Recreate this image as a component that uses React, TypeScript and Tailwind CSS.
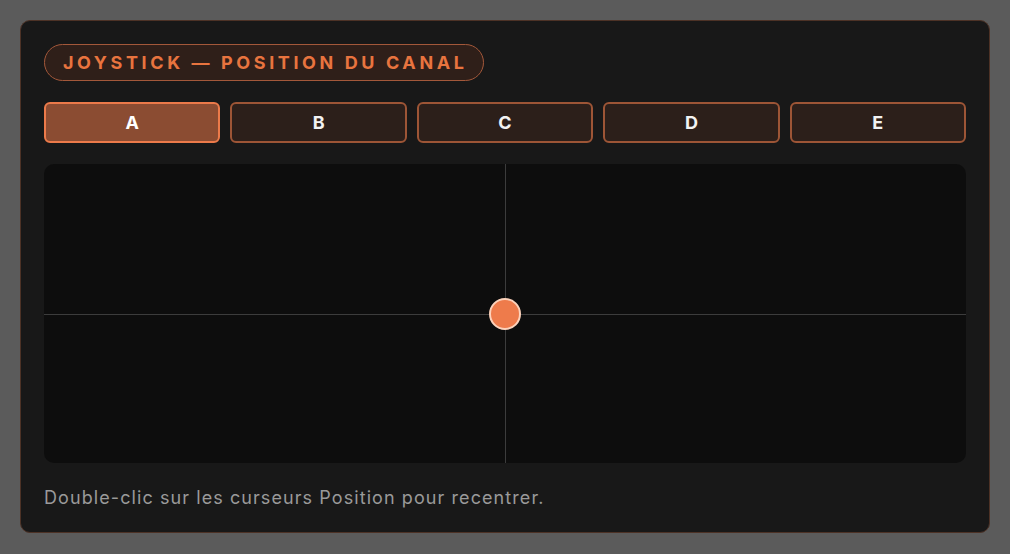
export default function App() {
  const tabs = ["A", "B", "C", "D", "E"];
  return (
    <div className="w-[1010px] h-[554px] bg-[#5b5b5b] p-[20px]" style={{ fontFamily: "Inter, 'Liberation Sans', sans-serif" }}>
      <div className="w-[970px] h-[513px] rounded-[10px] border border-[#4d3226] bg-[#181818] px-[23px] pt-[23px] flex flex-col">
        <div className="self-start h-[37px] rounded-full border border-[#a3583a] bg-[#2f1f19] pl-[18px] pr-[15px] flex items-center">
          <span className="text-[18px] leading-none font-bold tracking-[0.2em] text-[#e8743f]">JOYSTICK — POSITION DU CANAL</span>
        </div>
        <div className="mt-[21px] grid grid-cols-5 gap-[10px]">
          {tabs.map((t, i) => (
            <button
              key={t}
              className={
                i === 0
                  ? "h-[41px] rounded-[6px] border-2 border-[#ec7a4a] bg-[#8b4c32] text-white text-[18px] font-bold flex items-center justify-center"
                  : "h-[41px] rounded-[6px] border-2 border-[#9d5536] bg-[#2c1f1a] text-[#f2f2f2] text-[18px] font-bold flex items-center justify-center"
              }
            >
              {t}
            </button>
          ))}
        </div>
        <div className="mt-[21px] relative h-[299px] rounded-[10px] bg-[#0d0d0d] overflow-hidden">
          <div className="absolute left-[461px] top-0 bottom-0 w-px bg-[#3c3c3c]" />
          <div className="absolute top-[150px] left-0 right-0 h-px bg-[#3c3c3c]" />
          <div className="absolute left-[445px] top-[134px] w-[32px] h-[32px] rounded-full bg-[#ee7b4b] border-2 border-[#fcd2bb]" />
        </div>
        <div className="mt-[21px] text-[18px] leading-[27px] tracking-[0.06em] text-[#9a9a9a]">Double-clic sur les curseurs Position pour recentrer.</div>
      </div>
    </div>
  );
}
